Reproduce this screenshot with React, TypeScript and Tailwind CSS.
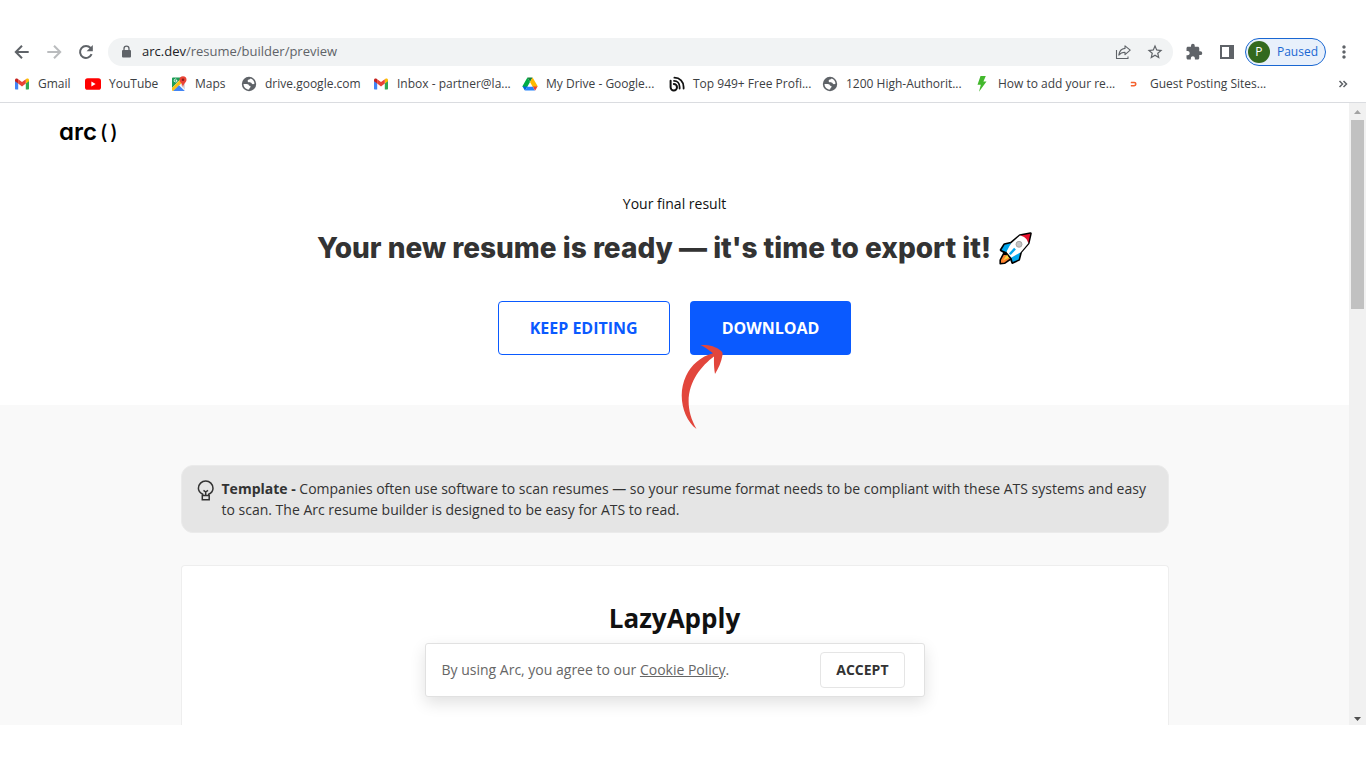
import React from "react";
import { MdStarBorder, MdExtension, MdMoreVert } from "react-icons/md";

function ArrowIcon({ forward = false }: { forward?: boolean }) {
  return (
    <svg viewBox="0 0 20 20" className="size-5" fill="none" stroke="currentColor" strokeWidth="2" aria-hidden="true">
      {forward ? <path d="M3.300 10h12.400M10 3.800l6.200 6.200-6.200 6.200" /> : <path d="M16.700 10H4.300M10 3.800 3.800 10l6.200 6.200" />}
    </svg>
  );
}

function ReloadIcon() {
  return (
    <svg viewBox="0 0 20 20" className="size-5" aria-hidden="true">
      <path d="M15.600 12.200a6 6 0 1 1-1-6.200l1.200 1.500" fill="none" stroke="currentColor" strokeWidth="2" />
      <path d="M16.800 3v6.200h-6.200z" fill="currentColor" />
    </svg>
  );
}

function GmailIcon() {
  return (
    <svg viewBox="0 0 16 16" className="size-4 shrink-0" aria-hidden="true">
      <path d="M1 4.2v8.3c0 .6.4 1 1 1h2.2V7.2z" fill="#4285f4" />
      <path d="M15 4.2v8.3c0 .6-.4 1-1 1h-2.2V7.2z" fill="#34a853" />
      <path d="M11.8 3.4v4.2L15 5.2V4c0-1.500-1.500-2.100-2.600-1.200z" fill="#fbbc04" />
      <path d="M4.200 7.600V3.200L8 6.100l3.800-2.900v4.400L8 10.500z" fill="#ea4335" />
      <path d="M1 4v1.200l3.200 2.400V3.200l-.6-.4C2.500 1.900 1 2.500 1 4z" fill="#c5221f" />
    </svg>
  );
}

function YouTubeIcon() {
  return (
    <svg viewBox="0 0 16 16" className="size-4 shrink-0" aria-hidden="true">
      <rect x="0" y="2.200" width="16" height="11.600" rx="2.600" fill="#f00" />
      <path d="M6.400 5.600v4.800L10.600 8z" fill="#fff" />
    </svg>
  );
}

function MapsIcon() {
  return (
    <svg viewBox="0 0 16 16" className="size-4 shrink-0" aria-hidden="true">
      <path d="M2 1.500h9L1 12V2.500a1 1 0 0 1 1-1z" fill="#1e9e57" />
      <path d="m1 12 8.500-8.800 1.800 3.400L2.400 15A1.200 1.200 0 0 1 1 13.800z" fill="#fbc116" />
      <path d="M2.200 15 8 9.300l5.800 5.700z" fill="#4285f4" />
      <path d="m9 8.400 5-1.900v7.300z" fill="#dadce0" />
      <path d="M6 4.500H4.700M6.100 4.400A1.500 1.500 0 1 1 5.500 3.300" fill="none" stroke="#fff" strokeWidth=".8" />
      <path d="M12 .3a3.500 3.500 0 0 0-3.500 3.500c0 2.600 2.900 3.400 3.500 7.700.6-4.300 3.500-5.100 3.500-7.700A3.500 3.500 0 0 0 12 .3z" fill="#ea4335" />
      <circle cx="12" cy="3.800" r="1.300" fill="#8c1d18" />
    </svg>
  );
}

function GlobeIcon() {
  return (
    <svg viewBox="0 0 16 16" className="size-4 shrink-0" aria-hidden="true">
      <circle cx="8" cy="8" r="7.200" fill="#5f6368" />
      <path d="M9.600 2.600C9 3.800 6.600 3.400 6.600 5.100c0 1.400 1.700 1.200 2.900 1.400 1.200.2 1.300 1.700 2.500 1.700l1.500-.5c0-2.300-1.600-4.300-3.900-5.100z" fill="#fff" />
      <path d="M2.500 7.900h3.200c1.500 0 2.300.7 2.300 1.800 1.300 0 1.800.5 1.500 1.400-.3.800-1.200.9-1.400 2.300-3.100.1-5.600-2.400-5.600-5.500z" fill="#fff" />
    </svg>
  );
}

function DriveIcon() {
  return (
    <svg viewBox="0 0 16 16" className="size-4 shrink-0" aria-hidden="true">
      <path d="M5.400 1.500h5.200L8 6z" fill="#188038" />
      <path d="M5.400 1.500.7 9.700c-.3.500-.3.900 0 1.400h4.500L8 6z" fill="#00ac47" />
      <path d="M10.600 1.500 8 6l2.800 5h4.600c.2-.5.200-.9-.1-1.400z" fill="#ffba00" />
      <path d="M.6 10.500h4.900l-2.400 4c-.3-.1-.5-.4-.7-.7z" fill="#0066da" />
      <path d="M5.300 10.800h5.500l2.200 3.700H3.100z" fill="#2684fc" />
      <path d="M10.700 10.500h4.800l-1.800 3.300c-.2.300-.4.500-.7.700z" fill="#ea4335" />
    </svg>
  );
}

function BroadcastIcon() {
  return (
    <svg viewBox="0 0 16 16" className="size-4 shrink-0" fill="none" stroke="#111" strokeLinecap="round" aria-hidden="true">
      <path d="M1.600 4.800v6.400a3.200 3.200 0 1 0 3.200-3.200" strokeWidth="2" />
      <path d="M5 4.800c3.400 0 5.600 2.500 5.600 6.200v1.500M5.400 1.700c5.500 0 9.200 4 9.200 9.300v1.500" strokeWidth="1.800" />
    </svg>
  );
}

function BoltIcon() {
  return (
    <svg viewBox="0 0 16 16" className="size-4 shrink-0" aria-hidden="true">
      <path d="M6.500 0h5.300L9.400 5.500h3.100L5 15.800l1.800-7H3.500z" fill="#43b82d" />
    </svg>
  );
}

function OrangeMarkIcon() {
  return (
    <svg viewBox="0 0 16 16" className="size-4 shrink-0" fill="none" stroke="#f4622f" strokeWidth="1.600" aria-hidden="true">
      <path d="M5 6.500h3.200a1.500 1.500 0 0 1 0 3.200H5M5.600 6v1.200M5.600 9v1.200" />
    </svg>
  );
}

function LockIcon() {
  return (
    <svg viewBox="0 0 12 14" className="h-3.5 w-3 shrink-0" aria-hidden="true">
      <rect x="2" y="5" width="9" height="7.500" rx="1" fill="#5f6368" />
      <path d="M4 5.500V3.700a2.500 2.500 0 0 1 5 0v1.800" fill="none" stroke="#5f6368" strokeWidth="1.300" />
    </svg>
  );
}

function ShareIcon() {
  return (
    <svg viewBox="0 0 16 16" className="size-4" fill="none" stroke="#5f6368" strokeWidth="1.100" strokeLinejoin="round" aria-hidden="true">
      <path d="M1.500 6v8.500h11.500V12.500" />
      <path d="M10 1.800 15.200 6.200 10 10.700V8.200c-2.700 0-4.700.8-6.200 2.900.5-3.700 2.600-6.300 6.200-6.700z" />
    </svg>
  );
}

function SidePanelIcon() {
  return (
    <svg viewBox="0 0 16 16" className="size-4" aria-hidden="true">
      <path d="M1 1h14v14H1zM3 3v10h7V3z" fill="#5f6368" fillRule="evenodd" />
    </svg>
  );
}

function RocketIcon() {
  return (
    <svg viewBox="0 0 33 33" className="size-[33px] shrink-0" role="img" aria-label="Rocket" strokeLinejoin="round">
      <path d="M2 18 5.500 12.500l6.500-1.500L21 3.500 31.500 1.500l-2.200 9.700-7.500 8.800-2 7.600-6.300 3-1.700-5.100-4.500-4.500z" fill="#fff" stroke="#000" strokeWidth="2.600" />
      <path d="M5 20.800 1.200 28v3.800l4.300-.5 7-4.800z" fill="#ff822d" stroke="#000" strokeWidth="1.600" />
      <path d="m7.500 20 4.500-8.500L21 3.500c4.500.2 8 3.500 8.300 7.700L21.500 20.500 12.500 26z" fill="#fff" />
      <path d="M5.700 12.800 12 11.300 7.300 20 2.500 18zM21.300 20.500l-1.700 6.900-5.900 2.700-1.200-4.600z" fill="#00a6ed" />
      <path d="M8 22.500 4 28.500l6-2.800z" fill="#fcd53f" />
      <path d="m21 3.700 10.300-2-2.100 9.500C28.700 7.300 25.400 4 21 3.700z" fill="#e8112d" />
      <path d="m10.800 22.300 5.200-5.700" stroke="#00a6ed" strokeWidth="2.400" />
      <circle cx="20" cy="12.300" r="3" fill="#c4c4c4" stroke="#9b9b9b" strokeWidth=".8" />
    </svg>
  );
}

function BulbIcon() {
  return (
    <svg viewBox="0 0 18 22" className="mt-0.5 h-[22px] w-[18px] shrink-0" fill="none" stroke="#333" strokeWidth="1.500" aria-hidden="true">
      <path d="M5.700 15v-.8C3.200 13 1.400 11 1.400 8.300a7.300 7.300 0 0 1 14.600 0c0 2.700-1.600 4.700-4.300 5.900v.8" />
      <path d="M5.300 15.500h6.900v4.300H5.300zM8.700 15.200V12L6.500 10.300M8.700 12l2.300-1.700" />
    </svg>
  );
}

const bookmarks = [
  { label: "Gmail", icon: GmailIcon, width: "w-[71px]" },
  { label: "YouTube", icon: YouTubeIcon, width: "w-[86px]" },
  { label: "Maps", icon: MapsIcon, width: "w-[70px]" },
  { label: "drive.google.com", icon: GlobeIcon, width: "w-[132px]" },
  { label: "Inbox - partner@la...", icon: GmailIcon, width: "w-[149px]" },
  { label: "My Drive - Google...", icon: DriveIcon, width: "w-[147px]" },
  { label: "Top 949+ Free Profi...", icon: BroadcastIcon, width: "w-[153px]" },
  { label: "1200 High-Authorit...", icon: GlobeIcon, width: "w-[152px]" },
  { label: "How to add your re...", icon: BoltIcon, width: "w-[152px]" },
  { label: "Guest Posting Sites...", icon: OrangeMarkIcon, width: "w-[152px]" },
];

function Toolbar() {
  return (
    <div className="flex h-7 items-center px-3 text-[#5f6368]">
      <div className="flex shrink-0 items-center gap-3">
        <button aria-label="Back"><ArrowIcon /></button>
        <button aria-label="Forward" className="text-[#babcbe]"><ArrowIcon forward /></button>
        <button aria-label="Reload"><ReloadIcon /></button>
      </div>
      <div className="ml-3 flex h-7 flex-1 items-center rounded-full bg-[#f1f3f4] pr-2.5 pl-3">
        <LockIcon />
        <div className="ml-2.5 flex-1 text-[13px]">
          <span className="text-[#202124]">arc.dev</span>/resume/builder/preview
        </div>
        <div className="flex items-center gap-4">
          <button aria-label="Share"><ShareIcon /></button>
          <button aria-label="Bookmark this page"><MdStarBorder size={18} className="-mx-px" /></button>
        </div>
      </div>
      <div className="ml-3 flex items-center gap-4">
        <button aria-label="Extensions"><MdExtension size={18} /></button>
        <button aria-label="Side panel"><SidePanelIcon /></button>
      </div>
      <button className="ml-2.5 flex h-7 items-center gap-[7px] rounded-full border border-[#1967d2] bg-[#e8f0fb] pr-[7px] pl-0.5 text-xs text-[#1967d2]">
        <span className="flex size-[22px] items-center justify-center rounded-full bg-[#33691e] text-white">P</span>
        Paused
      </button>
      <button aria-label="Menu" className="ml-2"><MdMoreVert size={20} /></button>
    </div>
  );
}

function BookmarkBar() {
  return (
    <nav aria-label="Bookmarks" className="flex h-[37px] items-center justify-between border-b border-[#dadce0] pr-[18px] pl-3.5 text-xs text-[#3c4043]">
      <div className="flex min-w-0 overflow-hidden">
        {bookmarks.map(({ label, icon: Icon, width }) => (
          <a key={label} href="#" className={`flex shrink-0 items-center gap-2 whitespace-nowrap ${width}`}>
            <Icon />
            {label}
          </a>
        ))}
      </div>
      <button aria-label="More bookmarks">
        <svg viewBox="0 0 10 10" className="size-2.5" fill="none" stroke="#5f6368" strokeWidth="1.500" aria-hidden="true">
          <path d="m1.500 2 3 3-3 3M5.500 2l3 3-3 3" />
        </svg>
      </button>
    </nav>
  );
}

function Scrollbar() {
  return (
    <div aria-hidden="true" className="flex w-[17px] shrink-0 flex-col items-center bg-[#f1f1f1]">
      <svg viewBox="0 0 17 17" className="size-[17px] shrink-0"><path d="M5 11h7L8.500 7z" fill="#a3a3a3" /></svg>
      <div className="h-[189px] w-[13px] bg-[#c1c1c1]" />
      <svg viewBox="0 0 17 17" className="mt-auto size-[17px] shrink-0"><path d="M5 9h7l-3.500 4z" fill="#505050" /></svg>
    </div>
  );
}

function Hero() {
  return (
    <section className="flex flex-col items-center pt-10 pb-[50px]">
      <p className="text-sm leading-6 text-[#111]">Your final result</p>
      <h1 className="mt-3 flex items-center gap-2 font-['Inter',sans-serif] text-[28px] leading-10 font-extrabold text-[#333]">
        Your new resume is ready — it's time to export it!
        <RocketIcon />
      </h1>
      <div className="relative mt-[33px] flex gap-5 text-base font-bold">
        <button className="h-[54px] rounded border border-[#0a5aff] px-[31px] text-[#0a5aff]">KEEP EDITING</button>
        <button className="h-[54px] rounded bg-[#0a5aff] px-8 text-white">DOWNLOAD</button>
        <svg viewBox="0 0 44 86" className="pointer-events-none absolute top-[42px] left-[182px] h-[86px] w-11" aria-hidden="true">
          <path d="M20.500 2C28 1.500 36 3.200 40.500 7.500c2 1.500 2.300 2.500 2 4.500-1 7-4 13-7.500 19-1-6-1.200-11-1-17.500C19.500 24 3 45 10.500 72c1.500 5 3.300 9.300 6 14C3 76-3 52 6 33 11 22 21 13.500 33 10.300 29 7 25 4.300 20.500 2z" fill="#e2463c" />
        </svg>
      </div>
    </section>
  );
}

function CookieBanner() {
  return (
    <div className="absolute bottom-7 left-1/2 flex h-[54px] w-[500px] -translate-x-1/2 items-center justify-between rounded-[3px] border border-[#e1e1e1] bg-white pr-[19px] pl-4 text-sm text-[#666] shadow-[0_6px_16px_rgba(0,0,0,0.12)]">
      <p>By using Arc, you agree to our <a href="#" className="underline">Cookie Policy</a>.</p>
      <button className="h-9 rounded border border-[#e5e5e5] px-[15px] font-bold text-[#333]">ACCEPT</button>
    </div>
  );
}

export default function App() {
  return (
    <div className="flex h-screen flex-col bg-white pt-[38px] pb-[43px] font-['Open_Sans',sans-serif]">
      <Toolbar />
      <BookmarkBar />
      <div className="flex min-h-0 flex-1">
        <div className="relative flex min-w-0 flex-1 flex-col overflow-hidden">
          <header className="flex h-[49px] shrink-0 items-center px-[59px] pt-2">
            <a href="#" className="flex items-center gap-[3px] font-['Inter',sans-serif] text-2xl leading-8 font-semibold text-black [font-feature-settings:'cv11']">
              arc
              <span className="text-xl leading-8 font-medium">(</span>
              <span className="text-xl leading-8 font-medium">)</span>
            </a>
          </header>
          <Hero />
          <main className="flex flex-1 flex-col gap-8 bg-[#f9f9f9] px-8 pt-[60px]">
            <aside className="mx-auto flex w-full max-w-[988px] gap-[7px] rounded-xl border border-[#ebebeb] bg-[#e5e5e5] px-[15px] py-3 text-sm leading-[21px] text-[#333]">
              <BulbIcon />
              <p><strong>Template -</strong> Companies often use software to scan resumes — so your resume format needs to be compliant with these ATS systems and easy to scan. The Arc resume builder is designed to be easy for ATS to read.</p>
            </aside>
            <article className="mx-auto w-full max-w-[988px] flex-1 rounded-t border border-b-0 border-[#eee] bg-white pt-8 text-center">
              <h2 className="text-[26px] leading-10 font-bold text-[#111]">LazyApply</h2>
            </article>
          </main>
          <CookieBanner />
        </div>
        <Scrollbar />
      </div>
    </div>
  );
}
